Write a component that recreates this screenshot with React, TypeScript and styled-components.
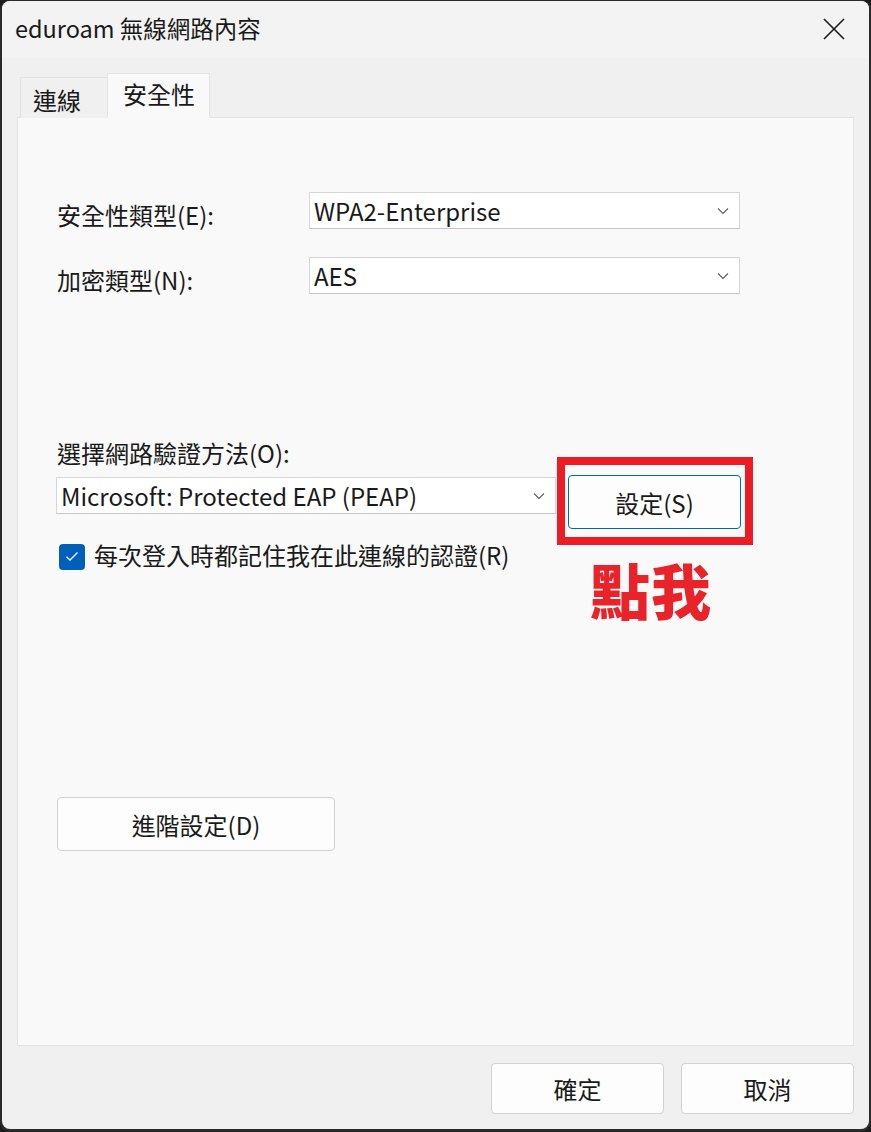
import styled, { createGlobalStyle } from 'styled-components';

const GlobalStyle = createGlobalStyle`
  html, body {
    margin: 0;
    padding: 0;
    background: #1c1c1c;
  }
  body {
    font-family: "Noto Sans CJK TC", "Noto Sans", sans-serif;
    color: #1a1a1a;
  }
`;

const Frame = styled.div`
  width: 871px;
  height: 1132px;
  box-sizing: border-box;
  padding: 1px 2px 3px 2px;
  background: #2a2a2a;
  border-radius: 10px;
`;

const Dialog = styled.div`
  height: 100%;
  display: flex;
  flex-direction: column;
  background: #f0f0f0;
  border-radius: 8px;
  overflow: hidden;
`;

const TitleBar = styled.div`
  height: 57px;
  flex: none;
  display: flex;
  align-items: center;
  justify-content: space-between;
  padding: 0 24px 0 13px;
  background: #f3f3f3;
`;

const Title = styled.div`
  font-size: 23.5px;
  margin-top: -3px;
`;

const CloseButton = styled.div`
  width: 22px;
  height: 22px;
  display: flex;
  margin-top: -2px;
`;

const Body = styled.div`
  flex: 1;
  display: flex;
  flex-direction: column;
  padding: 16px 15px 0 15px;
`;

const TabRow = styled.div`
  display: flex;
  align-items: flex-end;
  padding-left: 3px;
  height: 44px;
  margin-bottom: -1px;
  position: relative;
  z-index: 1;
`;

const Tab = styled.div<{ $active?: boolean }>`
  box-sizing: border-box;
  height: ${p => (p.$active ? 45 : 41)}px;
  padding: ${p => (p.$active ? '0 14px 5px 15px' : '2px 26px 0 12px')};
  display: flex;
  align-items: center;
  font-size: 24px;
  background: ${p => (p.$active ? '#f9f9f9' : '#f0f0f0')};
  border: 1px solid #e3e3e3;
  border-bottom: ${p => (p.$active ? '1px solid #f9f9f9' : 'none')};
  margin-left: ${p => (p.$active ? -1 : 0)}px;
`;

const Panel = styled.div`
  height: 929px;
  box-sizing: border-box;
  background: #f9f9f9;
  border: 1px solid #e3e3e3;
  padding: 74px 0 0 39px;
  display: flex;
  flex-direction: column;
  position: relative;
`;

const FieldRow = styled.div`
  display: flex;
  align-items: center;
  height: 37px;
  margin-bottom: 28px;
`;

const Label = styled.div`
  width: 252px;
  font-size: 24px;
  margin-top: 8px;
`;

const Select = styled.div<{ $width: number }>`
  box-sizing: border-box;
  width: ${p => p.$width}px;
  height: 37px;
  background: #fff;
  border: 1px solid #d6d6d6;
  border-bottom-color: #c4c4c4;
  display: flex;
  align-items: center;
  justify-content: space-between;
  padding: 0 10px 0 4px;
  font-size: 24px;
  line-height: 1;
`;

const Chevron = () => (
  <svg width="12" height="8" viewBox="0 0 12 8">
    <path d="M1 1.5 L6 6.5 L11 1.5" fill="none" stroke="#5d5d5d" strokeWidth="1.1" />
  </svg>
);

const MethodLabel = styled.div`
  font-size: 24px;
  margin-top: 116px;
  height: 30px;
  line-height: 30px;
`;

const MethodRow = styled.div`
  display: flex;
  align-items: flex-start;
  gap: 12px;
  margin: 9px 0 0 -1px;
  height: 37px;

  & > :last-child {
    margin-top: -2px;
  }
`;

const Button = styled.div<{ $width: number; $height: number; $primary?: boolean }>`
  box-sizing: border-box;
  width: ${p => p.$width}px;
  height: ${p => p.$height}px;
  flex: none;
  display: flex;
  align-items: center;
  justify-content: center;
  background: #fdfdfd;
  border: 1px solid ${p => (p.$primary ? '#0067c0' : '#d2d2d2')};
  border-radius: 4px;
  font-size: 24px;
`;

const CheckRow = styled.div`
  display: flex;
  align-items: center;
  gap: 9px;
  margin-top: 23px;
  margin-left: 2px;
  font-size: 24px;
`;

const CheckBox = styled.div`
  width: 26px;
  height: 26px;
  border-radius: 4px;
  background: #005fb8;
  display: flex;
  align-items: center;
  justify-content: center;
  margin-top: 4px;
`;

const Highlight = styled.div`
  position: absolute;
  left: 539px;
  top: 339px;
  width: 196px;
  height: 88px;
  box-sizing: border-box;
  border: 8px solid #ec1c24;
`;

const ClickMe = styled.div`
  position: absolute;
  left: 572px;
  top: 427px;
  font-size: 60px;
  font-weight: 900;
  color: #e8232a;
  letter-spacing: 1px;
`;

const AdvancedWrap = styled.div`
  margin-top: 225px;
`;

const Footer = styled.div`
  flex: 1;
  display: flex;
  justify-content: flex-end;
  align-items: center;
  gap: 17px;
  padding-top: 1px;
`;

export default function App() {
  return (
    <>
      <GlobalStyle />
      <Frame>
        <Dialog>
          <TitleBar>
            <Title>eduroam 無線網路內容</Title>
            <CloseButton>
              <svg width="22" height="22" viewBox="0 0 22 22">
                <path d="M1 1 L21 21 M21 1 L1 21" stroke="#1a1a1a" strokeWidth="1.6" />
              </svg>
            </CloseButton>
          </TitleBar>
          <Body>
            <TabRow>
              <Tab>連線</Tab>
              <Tab $active>安全性</Tab>
            </TabRow>
            <Panel>
              <FieldRow>
                <Label>安全性類型(E):</Label>
                <Select $width={431}>
                  WPA2-Enterprise
                  <Chevron />
                </Select>
              </FieldRow>
              <FieldRow>
                <Label>加密類型(N):</Label>
                <Select $width={431}>
                  AES
                  <Chevron />
                </Select>
              </FieldRow>
              <MethodLabel>選擇網路驗證方法(O):</MethodLabel>
              <MethodRow>
                <Select $width={500}>
                  Microsoft: Protected EAP (PEAP)
                  <Chevron />
                </Select>
                <Button $width={173} $height={54} $primary>設定(S)</Button>
              </MethodRow>
              <CheckRow>
                <CheckBox>
                  <svg width="14" height="11" viewBox="0 0 14 11">
                    <path d="M1.5 5.8 L5 9 L12.5 1.5" fill="none" stroke="#fff" strokeWidth="1.3" />
                  </svg>
                </CheckBox>
                每次登入時都記住我在此連線的認證(R)
              </CheckRow>
              <AdvancedWrap>
                <Button $width={278} $height={54}>進階設定(D)</Button>
              </AdvancedWrap>
              <Highlight />
              <ClickMe>點我</ClickMe>
            </Panel>
            <Footer>
              <Button $width={173} $height={51}>確定</Button>
              <Button $width={173} $height={51}>取消</Button>
            </Footer>
          </Body>
        </Dialog>
      </Frame>
    </>
  );
}
